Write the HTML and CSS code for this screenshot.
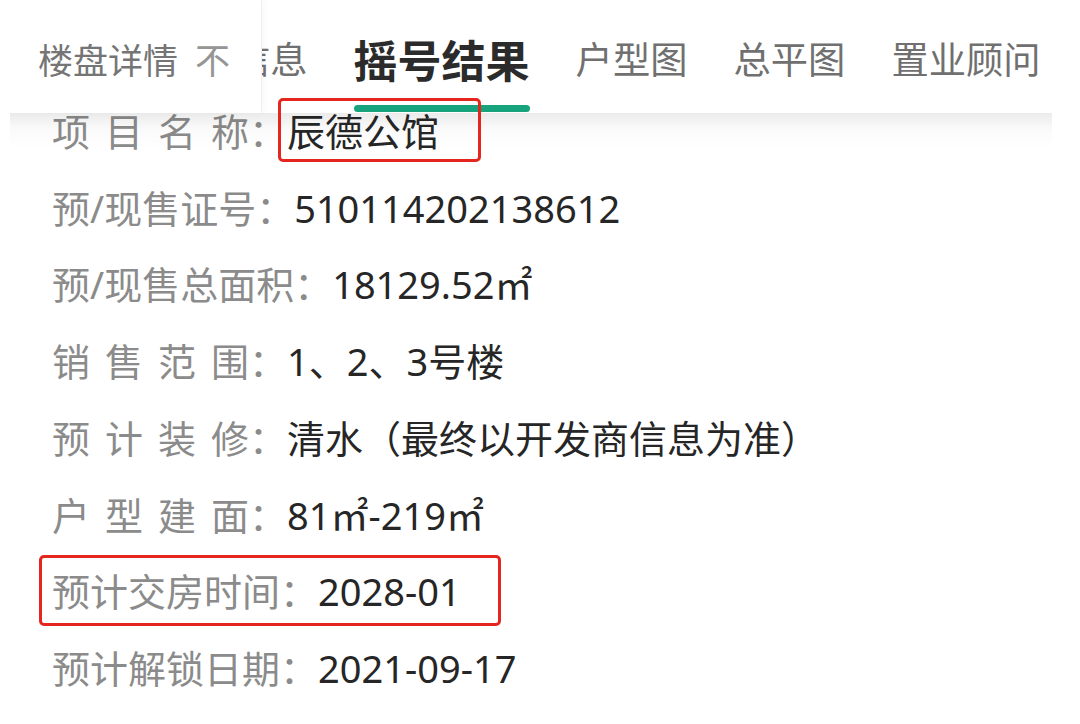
FILE: index.html
```html
<!DOCTYPE html>
<html lang="zh-CN">
<head>
<meta charset="utf-8">
<title>摇号结果</title>
<link rel="stylesheet" href="styles.css">
</head>
<body>
<div class="page">
  <header class="tabs">
    <div class="tab-fixed"><span class="tab-main">楼盘详情</span><span class="tab-ghost">不</span></div>
    <nav class="tab-scroll">
      <span class="tab">信息</span>
      <span class="tab active">摇号结果</span>
      <span class="tab">户型图</span>
      <span class="tab">总平图</span>
      <span class="tab">置业顾问</span>
    </nav>
  </header>
  <main class="info">
    <div class="row"><span class="label spread">项目名称</span><span class="label">：</span><span class="val">辰德公馆</span></div>
    <div class="row"><span class="label">预/现售证号：</span><span class="val">510114202138612</span></div>
    <div class="row"><span class="label">预/现售总面积：</span><span class="val">18129.52㎡</span></div>
    <div class="row"><span class="label spread">销售范围</span><span class="label">：</span><span class="val">1、2、3号楼</span></div>
    <div class="row"><span class="label spread">预计装修</span><span class="label">：</span><span class="val">清水（最终以开发商信息为准）</span></div>
    <div class="row"><span class="label spread">户型建面</span><span class="label">：</span><span class="val">81㎡-219㎡</span></div>
    <div class="row"><span class="label">预计交房时间：</span><span class="val">2028-01</span></div>
    <div class="row"><span class="label">预计解锁日期：</span><span class="val">2021-09-17</span></div>
  </main>
  <div class="mark mark-name"></div>
  <div class="mark mark-delivery"></div>
</div>
</body>
</html>
```

FILE: styles.css
```css
html, body {
  margin: 0;
  padding: 0;
  width: 1080px;
  height: 724px;
  overflow: hidden;
  background: #ffffff;
}

.page {
  position: relative;
  width: 1080px;
  height: 724px;
  overflow: hidden;
  background: #ffffff;
  font-family: "Noto Sans", "Noto Sans CJK SC", sans-serif;
}

/* ---------- tab bar ---------- */
.tabs {
  position: absolute;
  top: 0;
  left: 0;
  width: 1052px;
  height: 113px;
  box-sizing: border-box;
  padding-top: 4px;
  background: #ffffff;
  display: flex;
  align-items: center;
  z-index: 2;
  font-family: "Noto Sans CJK SC", sans-serif;
  line-height: 1;
  white-space: nowrap;
}

.tabs::after {
  content: "";
  position: absolute;
  left: 10px;
  right: 0;
  top: 113px;
  height: 36px;
  background: linear-gradient(rgba(0, 0, 0, 0.08), rgba(0, 0, 0, 0.02) 45%, rgba(0, 0, 0, 0));
  pointer-events: none;
}

.tab-fixed {
  position: relative;
  z-index: 1;
  align-self: stretch;
  margin-top: -4px;
  flex: none;
  width: 262px;
  box-sizing: border-box;
  padding: 4px 0 0 38px;
  display: flex;
  align-items: center;
  background: #ffffff;
  border-right: 1px solid #f0f0f0;
  box-shadow: 3px 0 5px rgba(0, 0, 0, 0.025);
}

.tab-main {
  font-size: 35px;
  color: #757575;
}

.tab-ghost {
  font-size: 35px;
  color: #959595;
  margin-left: 17px;
}

.tab-scroll {
  display: flex;
  align-items: center;
  gap: 46px;
  margin-left: -29px;
}

.tab {
  flex: none;
  font-size: 37.3px;
  color: #707070;
}

.tab.active {
  position: relative;
  font-size: 44px;
  font-weight: 700;
  color: #2b2b2b;
}

.tab.active::after {
  content: "";
  position: absolute;
  left: 0;
  right: 0;
  top: 68px;
  height: 7px;
  border-radius: 4px;
  background: #17a47c;
}

/* ---------- info list ---------- */
.info {
  display: block;
  padding: 93px 0 0 52px;
  font-size: 38px;
  line-height: 76.7px;
  color: #262626;
}

.row {
  white-space: nowrap;
}

.label {
  color: #8b8b8b;
}

.spread {
  display: inline-block;
  width: 197px;
  text-align: justify;
  text-align-last: justify;
}

.val {
  color: #262626;
}

/* ---------- red annotation boxes ---------- */
.mark {
  position: absolute;
  box-sizing: border-box;
  border: 3px solid #e5261f;
  border-radius: 5px;
  z-index: 3;
}

.mark-name {
  left: 278px;
  top: 98px;
  width: 203px;
  height: 64px;
}

.mark-delivery {
  left: 39px;
  top: 555px;
  width: 462px;
  height: 71px;
}
```
